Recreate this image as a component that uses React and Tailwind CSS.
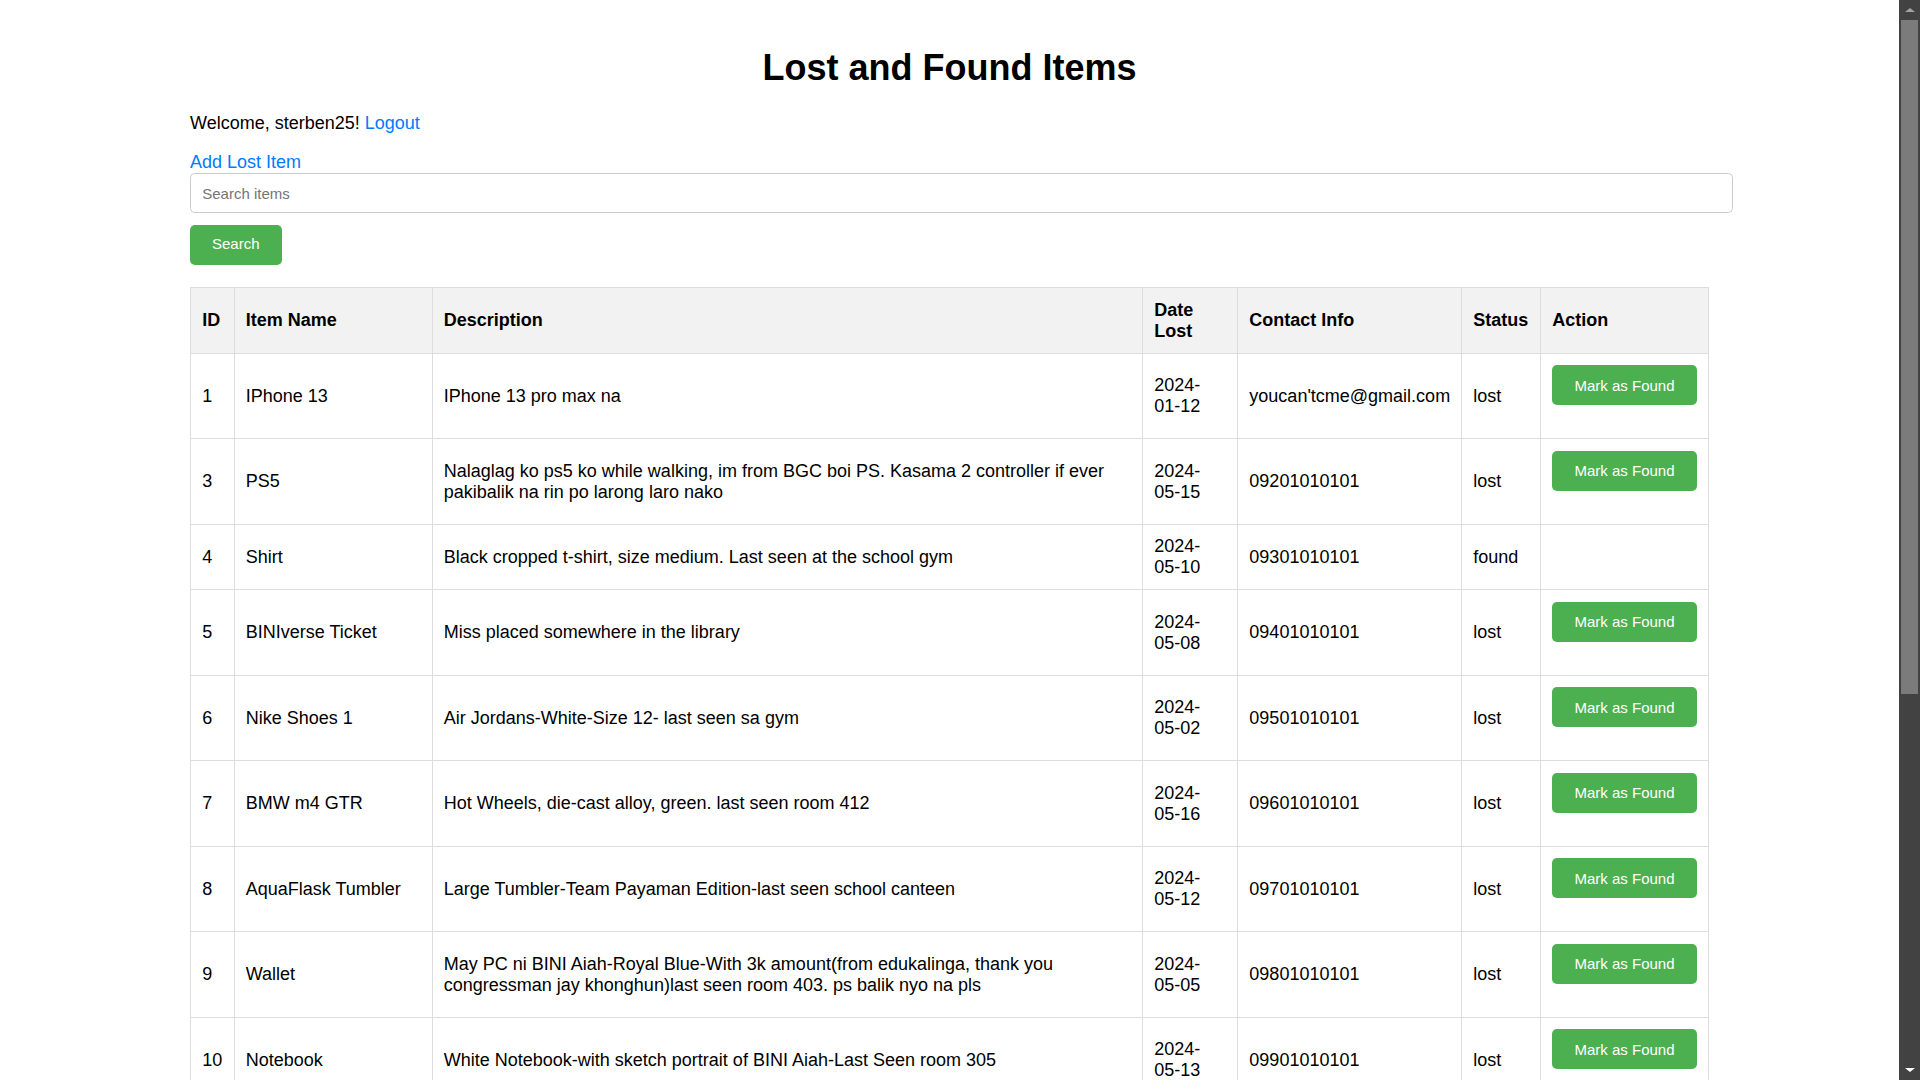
import React, { useState } from 'react';

const items = [
  { id: 1, name: 'IPhone 13', desc: 'IPhone 13 pro max na', date: '2024-01-12', contact: "youcan'tcme@gmail.com", status: 'lost' },
  { id: 3, name: 'PS5', desc: 'Nalaglag ko ps5 ko while walking, im from BGC boi PS. Kasama 2 controller if ever pakibalik na rin po larong laro nako', date: '2024-05-15', contact: '09201010101', status: 'lost' },
  { id: 4, name: 'Shirt', desc: 'Black cropped t-shirt, size medium. Last seen at the school gym', date: '2024-05-10', contact: '09301010101', status: 'found' },
  { id: 5, name: 'BINIverse Ticket', desc: 'Miss placed somewhere in the library', date: '2024-05-08', contact: '09401010101', status: 'lost' },
  { id: 6, name: 'Nike Shoes 1', desc: 'Air Jordans-White-Size 12- last seen sa gym', date: '2024-05-02', contact: '09501010101', status: 'lost' },
  { id: 7, name: 'BMW m4 GTR', desc: 'Hot Wheels, die-cast alloy, green. last seen room 412', date: '2024-05-16', contact: '09601010101', status: 'lost' },
  { id: 8, name: 'AquaFlask Tumbler', desc: 'Large Tumbler-Team Payaman Edition-last seen school canteen', date: '2024-05-12', contact: '09701010101', status: 'lost' },
  { id: 9, name: 'Wallet', desc: 'May PC ni BINI Aiah-Royal Blue-With 3k amount(from edukalinga, thank you congressman jay khonghun)last seen room 403. ps balik nyo na pls', date: '2024-05-05', contact: '09801010101', status: 'lost' },
  { id: 10, name: 'Notebook', desc: 'White Notebook-with sketch portrait of BINI Aiah-Last Seen room 305', date: '2024-05-13', contact: '09901010101', status: 'lost' },
];

const cell = 'border border-[#ddd] px-[11.25px] py-[11.25px] align-middle';

// date column is narrow, so the date wraps after the year
const DateCell = ({ date }) => (
  <>
    {date.slice(0, 5)}
    <br />
    {date.slice(5)}
  </>
);

const FakeScrollbar = () => (
  <div className="w-[21px] h-full bg-[#424242] flex flex-col items-center shrink-0">
    <div className="h-[20px] flex items-center justify-center">
      <div className="w-0 h-0 border-x-[5px] border-b-[4px] border-x-transparent border-b-[#a3a3a3]" />
    </div>
    <div className="w-[17px] h-[674px] bg-[#7b7b7b]" />
    <div className="flex-1" />
    <div className="h-[20px] flex items-center justify-center">
      <div className="w-0 h-0 border-x-[5px] border-t-[4px] border-x-transparent border-t-white" />
    </div>
  </div>
);

export default function App() {
  const [query, setQuery] = useState('');

  return (
    <div className="flex w-full h-[1080px] overflow-hidden bg-white font-['Liberation_Sans',Arial,sans-serif] text-black">
      <div className="flex-1 overflow-hidden">
        <div className="ml-[190px] w-[1519px] pt-[47px]">
          <h1 className="text-[36px] leading-[41px] font-bold text-center">Lost and Found Items</h1>

          <p className="mt-[24.5px] text-[18px] leading-[21px]">
            Welcome, sterben25! <a href="#" className="text-[#007bff]">Logout</a>
          </p>

          <a href="#" className="block mt-[18.5px] text-[18px] leading-[21px] text-[#007bff] w-fit">Add Lost Item</a>

          <form onSubmit={(e) => e.preventDefault()}>
            <input
              type="text"
              value={query}
              onChange={(e) => setQuery(e.target.value)}
              placeholder="Search items"
              className="block w-[1543px] h-[40px] px-[11.25px] border border-[#ccc] rounded-[4.5px] text-[15px] placeholder:text-[#757575] outline-none"
            />
            <button type="submit" className="mt-[11.5px] w-[91.5px] h-[40px] rounded-[5px] bg-[#4caf50] text-white text-[15px] flex items-center justify-center">
              Search
            </button>
          </form>

          <table className="mt-[22.75px] w-[1519px] table-fixed border-collapse text-[18px] leading-[21px]">
            <colgroup>
              <col className="w-[43.5px]" />
              <col className="w-[198px]" />
              <col className="w-[710.5px]" />
              <col className="w-[95.1px]" />
              <col className="w-[223.9px]" />
              <col className="w-[79px]" />
              <col className="w-[168.4px]" />
            </colgroup>
            <thead>
              <tr className="bg-[#f2f2f2]">
                <th className={`${cell} text-left font-bold`}>ID</th>
                <th className={`${cell} text-left font-bold`}>Item Name</th>
                <th className={`${cell} text-left font-bold`}>Description</th>
                <th className={`${cell} text-left font-bold`}>Date Lost</th>
                <th className={`${cell} text-left font-bold`}>Contact Info</th>
                <th className={`${cell} text-left font-bold`}>Status</th>
                <th className={`${cell} text-left font-bold`}>Action</th>
              </tr>
            </thead>
            <tbody>
              {items.map((item) => (
                <tr key={item.id}>
                  <td className={cell}>{item.id}</td>
                  <td className={cell}>{item.name}</td>
                  <td className={cell}>{item.desc}</td>
                  <td className={cell}><DateCell date={item.date} /></td>
                  <td className={`${cell} whitespace-nowrap`}>{item.contact}</td>
                  <td className={cell}>{item.status}</td>
                  <td className={cell}>
                    {item.status === 'lost' && (
                      <div className="pb-[22px]">
                        <button className="h-[40px] w-[144.5px] rounded-[5px] bg-[#4caf50] text-white text-[15px] flex items-center justify-center">
                          Mark as Found
                        </button>
                      </div>
                    )}
                  </td>
                </tr>
              ))}
            </tbody>
          </table>
        </div>
      </div>
      <FakeScrollbar />
    </div>
  );
}
